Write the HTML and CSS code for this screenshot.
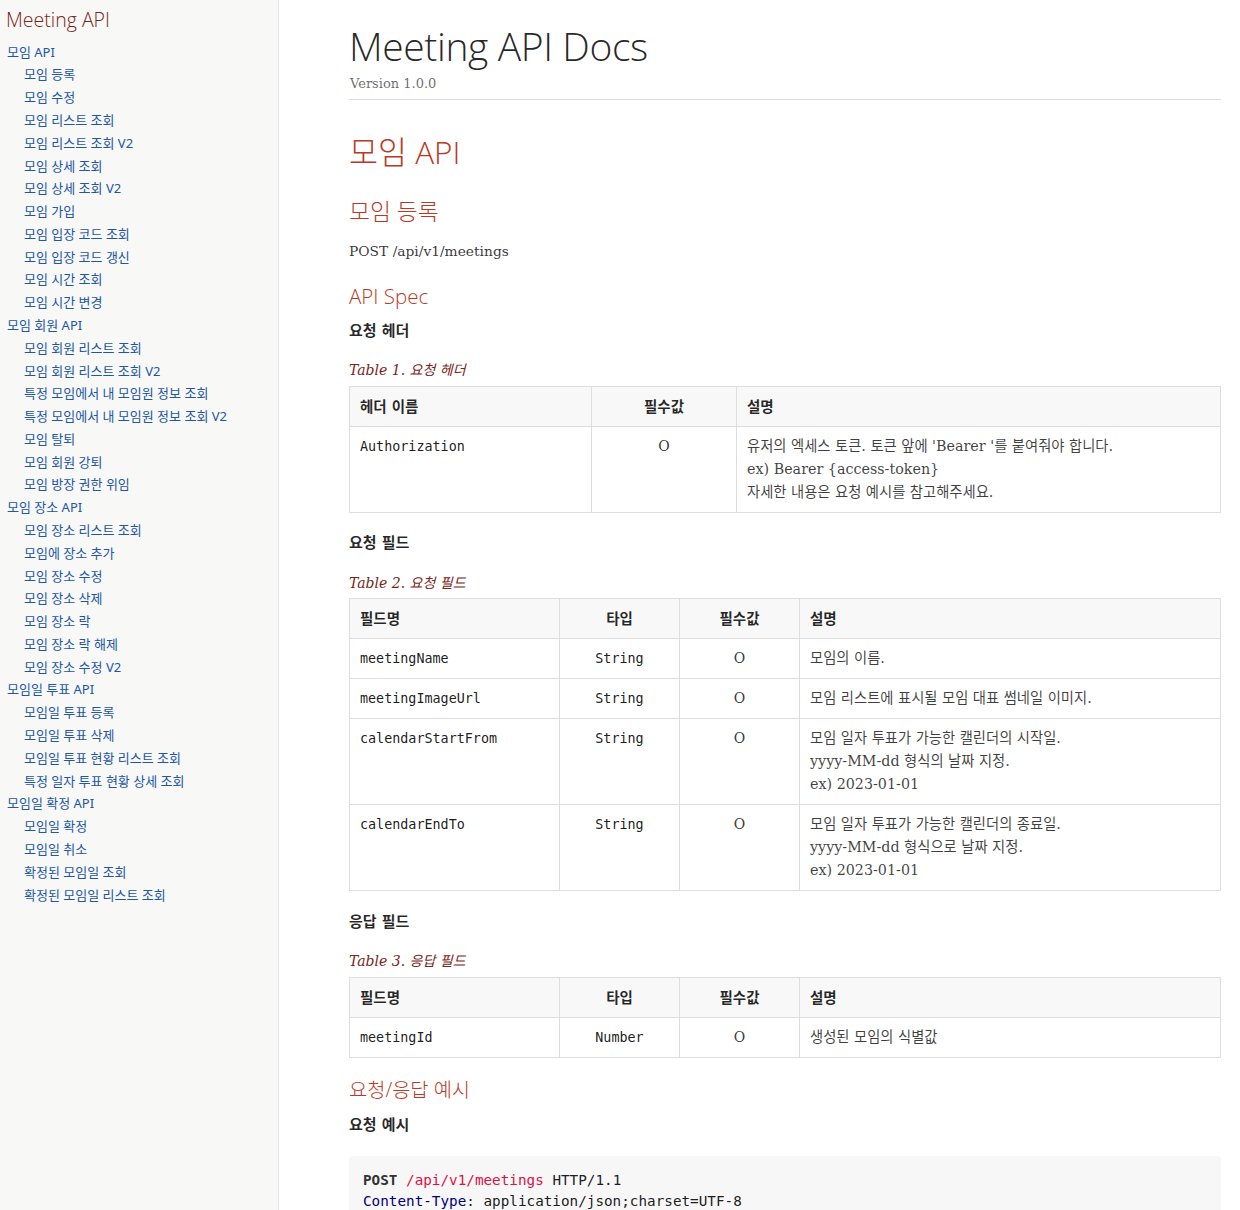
FILE: index.html
```html
<!DOCTYPE html>
<html lang="ko">
<head>
<meta charset="utf-8">
<title>Meeting API Docs</title>
<link rel="stylesheet" href="styles.css">
</head>
<body>
<div class="layout">
  <nav class="toc">
    <div class="toc-title">Meeting API</div>
    <ul class="sectlevel1">
      <li><a href="#">모임 API</a>
        <ul class="sectlevel2">
          <li><a href="#">모임 등록</a></li>
          <li><a href="#">모임 수정</a></li>
          <li><a href="#">모임 리스트 조회</a></li>
          <li><a href="#">모임 리스트 조회 V2</a></li>
          <li><a href="#">모임 상세 조회</a></li>
          <li><a href="#">모임 상세 조회 V2</a></li>
          <li><a href="#">모임 가입</a></li>
          <li><a href="#">모임 입장 코드 조회</a></li>
          <li><a href="#">모임 입장 코드 갱신</a></li>
          <li><a href="#">모임 시간 조회</a></li>
          <li><a href="#">모임 시간 변경</a></li>
        </ul>
      </li>
      <li><a href="#">모임 회원 API</a>
        <ul class="sectlevel2">
          <li><a href="#">모임 회원 리스트 조회</a></li>
          <li><a href="#">모임 회원 리스트 조회 V2</a></li>
          <li><a href="#">특정 모임에서 내 모임원 정보 조회</a></li>
          <li><a href="#">특정 모임에서 내 모임원 정보 조회 V2</a></li>
          <li><a href="#">모임 탈퇴</a></li>
          <li><a href="#">모임 회원 강퇴</a></li>
          <li><a href="#">모임 방장 권한 위임</a></li>
        </ul>
      </li>
      <li><a href="#">모임 장소 API</a>
        <ul class="sectlevel2">
          <li><a href="#">모임 장소 리스트 조회</a></li>
          <li><a href="#">모임에 장소 추가</a></li>
          <li><a href="#">모임 장소 수정</a></li>
          <li><a href="#">모임 장소 삭제</a></li>
          <li><a href="#">모임 장소 락</a></li>
          <li><a href="#">모임 장소 락 해제</a></li>
          <li><a href="#">모임 장소 수정 V2</a></li>
        </ul>
      </li>
      <li><a href="#">모임일 투표 API</a>
        <ul class="sectlevel2">
          <li><a href="#">모임일 투표 등록</a></li>
          <li><a href="#">모임일 투표 삭제</a></li>
          <li><a href="#">모임일 투표 현황 리스트 조회</a></li>
          <li><a href="#">특정 일자 투표 현황 상세 조회</a></li>
        </ul>
      </li>
      <li><a href="#">모임일 확정 API</a>
        <ul class="sectlevel2">
          <li><a href="#">모임일 확정</a></li>
          <li><a href="#">모임일 취소</a></li>
          <li><a href="#">확정된 모임일 조회</a></li>
          <li><a href="#">확정된 모임일 리스트 조회</a></li>
        </ul>
      </li>
    </ul>
  </nav>

  <main class="main">
    <header class="header">
      <h1 class="doc-title">Meeting API Docs</h1>
      <div class="details"><span>Version 1.0.0</span></div>
    </header>

    <h2 class="sect1">모임 API</h2>
    <h3 class="sect2">모임 등록</h3>
    <p class="para">POST /api/v1/meetings</p>

    <h4 class="sect3">API Spec</h4>
    <div class="label">요청 헤더</div>
    <div class="caption"><span class="cap-num">Table 1.</span> 요청 헤더</div>
    <table class="tbl">
      <colgroup><col style="width:242px"><col style="width:145px"><col></colgroup>
      <thead>
        <tr><th class="left">헤더 이름</th><th class="center">필수값</th><th class="left">설명</th></tr>
      </thead>
      <tbody>
        <tr>
          <td class="left"><code>Authorization</code></td>
          <td class="center">O</td>
          <td class="left desc">유저의 엑세스 토큰. 토큰 앞에 'Bearer '를 붙여줘야 합니다.<br>ex) Bearer {access-token}<br>자세한 내용은 요청 예시를 참고해주세요.</td>
        </tr>
      </tbody>
    </table>

    <div class="label">요청 필드</div>
    <div class="caption"><span class="cap-num">Table 2.</span> 요청 필드</div>
    <table class="tbl">
      <colgroup><col style="width:210px"><col style="width:120px"><col style="width:120px"><col></colgroup>
      <thead>
        <tr><th class="left">필드명</th><th class="center">타입</th><th class="center">필수값</th><th class="left">설명</th></tr>
      </thead>
      <tbody>
        <tr><td class="left"><code>meetingName</code></td><td class="center"><code>String</code></td><td class="center">O</td><td class="left desc">모임의 이름.</td></tr>
        <tr><td class="left"><code>meetingImageUrl</code></td><td class="center"><code>String</code></td><td class="center">O</td><td class="left desc">모임 리스트에 표시될 모임 대표 썸네일 이미지.</td></tr>
        <tr><td class="left"><code>calendarStartFrom</code></td><td class="center"><code>String</code></td><td class="center">O</td><td class="left desc">모임 일자 투표가 가능한 캘린더의 시작일.<br>yyyy-MM-dd 형식의 날짜 지정.<br>ex) 2023-01-01</td></tr>
        <tr><td class="left"><code>calendarEndTo</code></td><td class="center"><code>String</code></td><td class="center">O</td><td class="left desc">모임 일자 투표가 가능한 캘린더의 종료일.<br>yyyy-MM-dd 형식으로 날짜 지정.<br>ex) 2023-01-01</td></tr>
      </tbody>
    </table>

    <div class="label">응답 필드</div>
    <div class="caption"><span class="cap-num">Table 3.</span> 응답 필드</div>
    <table class="tbl">
      <colgroup><col style="width:210px"><col style="width:120px"><col style="width:120px"><col></colgroup>
      <thead>
        <tr><th class="left">필드명</th><th class="center">타입</th><th class="center">필수값</th><th class="left">설명</th></tr>
      </thead>
      <tbody>
        <tr><td class="left"><code>meetingId</code></td><td class="center"><code>Number</code></td><td class="center">O</td><td class="left desc">생성된 모임의 식별값</td></tr>
      </tbody>
    </table>

    <h4 class="sect3 example-title">요청/응답 예시</h4>
    <div class="label">요청 예시</div>
    <pre class="listing"><code><span class="kw">POST</span> <span class="path">/api/v1/meetings</span> HTTP/1.1
<span class="hdr">Content-Type</span>: application/json;charset=UTF-8
<span class="hdr">Authorization</span>: Bearer access-token
<span class="hdr">Content-Length</span>: 160
<span class="hdr">Host</span>: localhost:8080

{
  "meetingName" : "모임 이름",
  "meetingImageUrl" : "https://image.com",
  "calendarStartFrom" : "2023-01-01",
  "calendarEndTo" : "2023-01-31"
}</code></pre>
  </main>
</div>
</body>
</html>
```

FILE: styles.css
```css
html, body {
  margin: 0;
  padding: 0;
  background: #fff;
}

body {
  font-family: "DejaVu Serif", "Noto Sans CJK KR", serif;
  color: rgba(0, 0, 0, 0.8);
}

.layout {
  display: flex;
  align-items: stretch;
  min-height: 100vh;
}

/* ---------- TOC sidebar ---------- */
.toc {
  flex: none;
  box-sizing: border-box;
  width: 279px;
  background: #f8f8f7;
  border-right: 1px solid #e7e7e9;
  padding: 8px 0 0 6px;
}

.toc-title {
  font-family: "Open Sans", "Noto Sans CJK KR", sans-serif;
  font-weight: 300;
  font-size: 19.5px;
  line-height: 24px;
  color: #7a2518;
}

.toc ul {
  list-style: none;
  margin: 0;
  padding: 0;
  font-family: "Noto Sans", "Noto Sans CJK KR", sans-serif;
  font-size: 13px;
  line-height: 22.78px;
}

.toc .sectlevel1 {
  margin-top: 8.6px;
  padding-left: 1px;
}

.toc .sectlevel2 {
  padding-left: 17px;
}

.toc a {
  color: #2156a5;
  text-decoration: none;
  white-space: nowrap;
}

/* ---------- Main content ---------- */
.main {
  flex: 1;
  min-width: 0;
  padding: 0 19px 0 70px;
}

.header {
  border-bottom: 1px solid #dddddf;
  padding-bottom: 4px;
}

.doc-title {
  margin: 20px 0 0;
  font-family: "Open Sans", "Noto Sans CJK KR", sans-serif;
  font-weight: 300;
  font-size: 39px;
  letter-spacing: -0.01em;
  line-height: 52.8px;
  color: rgba(0, 0, 0, 0.85);
}

.details {
  padding-left: 1px;
  font-size: 13px;
  line-height: 22px;
  color: rgba(0, 0, 0, 0.6);
}

.sect1,
.sect2,
.sect3 {
  font-family: "Open Sans", "Noto Sans CJK KR", sans-serif;
  font-weight: 300;
  color: #ba3925;
  margin: 0;
}

.sect1 {
  font-size: 31.5px;
  line-height: 44.4px;
  margin-top: 30px;
}

.sect2 {
  font-size: 22.8px;
  line-height: 32.4px;
  margin-top: 21.6px;
}

.para {
  margin: 10.6px 0 0;
  font-size: 13.8px;
  line-height: 24px;
  color: rgba(0, 0, 0, 0.8);
}

.sect3 {
  font-size: 20.5px;
  line-height: 26.4px;
  margin-top: 19.8px;
}

.example-title {
  margin-top: 19px;
  font-size: 19.8px;
}

.label {
  margin-top: 10.8px;
  font-weight: bold;
  font-size: 15px;
  line-height: 22px;
  color: rgba(0, 0, 0, 0.85);
}

.tbl + .label {
  margin-top: 19.5px;
}

.caption {
  margin-top: 17.5px;
  font-style: italic;
  font-size: 14px;
  line-height: 22px;
  color: #7a2518;
}

/* ---------- Tables ---------- */
.tbl {
  width: 100%;
  margin-top: 4.5px;
  border-collapse: collapse;
  table-layout: fixed;
  border: 1px solid #dedede;
}

.tbl th,
.tbl td {
  border: 1px solid #dedede;
  padding: 8px 10px;
  line-height: 23px;
  font-size: 14px;
  vertical-align: top;
  color: rgba(0, 0, 0, 0.8);
}

.tbl th {
  background: #f7f8f7;
  font-weight: bold;
  font-size: 14.5px;
  color: rgba(0, 0, 0, 0.85);
}

.tbl td.desc {
  font-size: 14.3px;
  color: rgba(0, 0, 0, 0.75);
}

.left { text-align: left; }
.center { text-align: center; }

.tbl code {
  font-family: "DejaVu Sans Mono", monospace;
  font-size: 13.4px;
  color: rgba(0, 0, 0, 0.9);
}

/* ---------- Listing ---------- */
.listing {
  margin: 20px 0 0;
  padding: 13.5px 14px;
  background: #f7f7f8;
  border-radius: 4px;
  font-family: "DejaVu Sans Mono", "Noto Sans CJK KR", monospace;
  font-size: 14.3px;
  line-height: 21px;
  color: rgba(0, 0, 0, 0.9);
  overflow: hidden;
}

.listing .kw {
  font-weight: bold;
  color: #333;
}

.listing .path {
  color: #d14;
}

.listing .hdr {
  color: #000080;
}
```
